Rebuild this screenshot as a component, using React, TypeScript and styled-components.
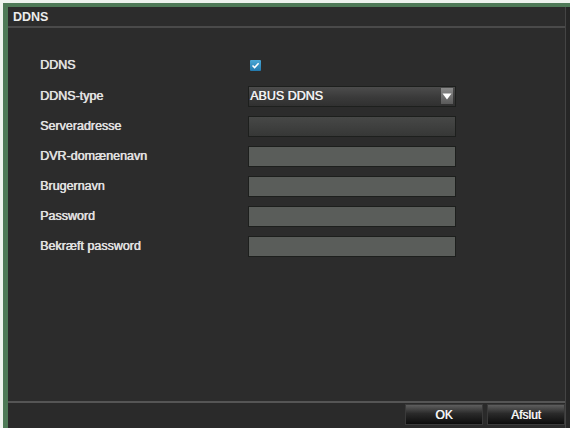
import React from "react";
import styled, { createGlobalStyle } from "styled-components";

const Global = createGlobalStyle`
  html, body { margin: 0; padding: 0; background: #eef3ee; }
  body { width: 570px; height: 428px; overflow: hidden; font-family: "Liberation Sans", Arial, sans-serif; }
  #root { width: 570px; height: 428px; }
`;

const Page = styled.div`
  width: 570px;
  height: 428px;
  padding: 3px 0 0 3px;
  box-sizing: border-box;
`;

const Frame = styled.div`
  height: 425px;
  box-sizing: border-box;
  border-top: 4px solid #4e7a57;
  border-left: 5px solid #4e7a57;
  background: #262626;
  display: flex;
`;

const Window = styled.div`
  width: 557px;
  height: 100%;
  background: #2c2c2c;
  border-right: 1px solid #444;
  display: flex;
  flex-direction: column;
`;

const TitleBar = styled.div`
  height: 19px;
  padding-left: 5px;
  display: flex;
  align-items: center;
  color: #ececec;
  font-size: 12.5px;
  font-weight: bold;
  border-bottom: 2px solid #4a4a4a;
`;

const Form = styled.div`
  flex: 1;
  display: grid;
  grid-template-columns: 208px 208px;
  grid-template-rows: 32px repeat(6, 30px);
  align-content: start;
  align-items: center;
  padding: 21px 0 0 32px;
`;

const Label = styled.div`
  color: #e2e2e2;
  font-size: 12.5px;
  text-shadow: 0.4px 0 0 #e2e2e2, 0 0 1px rgba(255, 255, 255, 0.3);
`;

const CheckBox = styled.div`
  width: 11px;
  height: 11px;
  margin-left: 2px;
  background: linear-gradient(#4aa8d6, #2379ad);
  border-radius: 1px;
  display: flex;
  align-items: center;
  justify-content: center;
`;

const Field = styled.div<{ $tone?: "flat" | "dim" | "select" }>`
  height: 21px;
  box-sizing: border-box;
  border: 1px solid #1d1f1d;
  background: ${(p) =>
    p.$tone === "select"
      ? "linear-gradient(#4c4c4c, #3a3a3a 55%, #303030)"
      : p.$tone === "dim"
      ? "linear-gradient(#474847, #3d3e3d 60%, #363736)"
      : "#5a5d5a"};
  display: flex;
  align-items: center;
  justify-content: space-between;
  padding: 0 2px 0 1px;
`;

const SelectText = styled.span`
  color: #f2f2f2;
  font-size: 12.5px;
  text-shadow: 0.4px 0 0 #f2f2f2;
`;

const Arrow = styled.div`
  width: 12px;
  height: 16px;
  background: linear-gradient(#8a8a8a, #5a5a5a);
  display: flex;
  align-items: center;
  justify-content: center;
`;

const Footer = styled.div`
  height: 24px;
  border-top: 2px solid #555;
  display: flex;
  justify-content: flex-end;
  align-items: flex-start;
  gap: 4px;
  padding-top: 1px;
  background: #2a2a2a;
`;

const Button = styled.div`
  width: 78px;
  height: 21px;
  display: flex;
  align-items: center;
  justify-content: center;
  color: #f4f4f4;
  font-size: 12px;
  text-shadow: 0.4px 0 0 #f4f4f4;
  background: linear-gradient(#5e5e5e, #2a2a2a 45%, #0c0c0c);
  border: 1px solid #3a3a3a;
  box-sizing: border-box;
`;

const rows: { label: string; tone: "flat" | "dim" }[] = [
  { label: "Serveradresse", tone: "dim" },
  { label: "DVR-domænenavn", tone: "flat" },
  { label: "Brugernavn", tone: "flat" },
  { label: "Password", tone: "flat" },
  { label: "Bekræft password", tone: "flat" },
];

export default function App() {
  return (
    <>
      <Global />
      <Page>
        <Frame>
          <Window>
            <TitleBar>DDNS</TitleBar>
            <Form>
              <Label>DDNS</Label>
              <CheckBox>
                <svg width="9" height="9" viewBox="0 0 9 9">
                  <path d="M1.5 4.5 L3.6 6.6 L7.6 2.2" stroke="#fff" strokeWidth="1.5" fill="none" />
                </svg>
              </CheckBox>
              <Label>DDNS-type</Label>
              <Field $tone="select">
                <SelectText>ABUS DDNS</SelectText>
                <Arrow>
                  <svg width="10" height="7" viewBox="0 0 10 7">
                    <path d="M0.5 0.5 L9.5 0.5 L5 6.5 Z" fill="#fff" />
                  </svg>
                </Arrow>
              </Field>
              {rows.map((r) => (
                <React.Fragment key={r.label}>
                  <Label>{r.label}</Label>
                  <Field $tone={r.tone} />
                </React.Fragment>
              ))}
            </Form>
            <Footer>
              <Button>OK</Button>
              <Button>Afslut</Button>
            </Footer>
          </Window>
        </Frame>
      </Page>
    </>
  );
}
